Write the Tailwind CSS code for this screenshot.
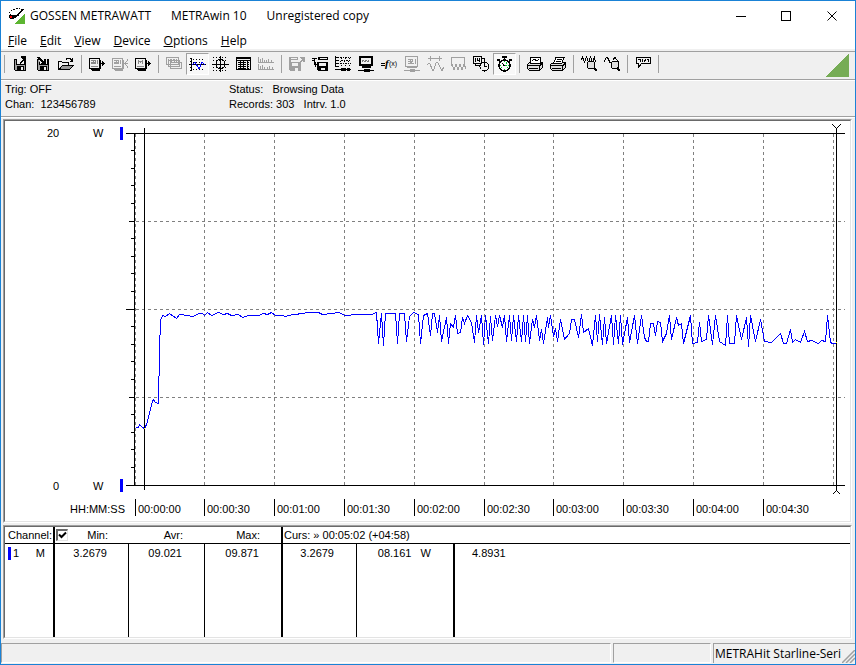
<!DOCTYPE html>
<html lang="en">
<head>
    <meta charset="UTF-8">
    <meta name="viewport" content="width=device-width, initial-scale=1.0">
    <title>GOSSEN METRAWATT - METRAwin 10</title>
    <script src="https://cdn.jsdelivr.net/npm/@tailwindcss/browser@4"></script>
</head>
<body class="min-h-screen flex flex-col border border-[#1a82d6] bg-[#f0f0f0] text-black font-['Open_Sans',sans-serif] text-[12px]">
    <!-- Title bar -->
    <header class="bg-white flex items-center h-[30px] pl-2 leading-4">
        <svg class="w-[17px] h-[17px] mr-1 shrink-0" viewBox="0 0 17 17" shape-rendering="crispEdges">
            <path d="M16 5V16H5z" fill="#5cb531"/>
            <path d="M0 4.500h1M2 2.500h1M4 1.500h2M7 .500h2M10 .5h1M12 1.500h1M1 6.500h1" stroke="#000"/>
            <path d="M0 7h8l-3 4H2l-2-1z" fill="#000"/>
            <path d="M1 8h2v2H1z" fill="#f00"/>
            <path d="M6 9l3-2 5-6" fill="none" stroke="#000" stroke-width="1.500"/>
        </svg>
        <h1 class="flex gap-5 whitespace-nowrap"><span>GOSSEN METRAWATT</span><span>METRAwin 10</span><span>Unregistered copy</span></h1>
        <div class="ml-auto flex h-full">
            <button class="w-[46px] flex items-center justify-center" aria-label="Minimize">
                <svg class="w-[11px] h-[11px]" viewBox="0 0 11 11" shape-rendering="crispEdges"><path d="M0 5.500h10" stroke="#000"/></svg>
            </button>
            <button class="w-[45px] flex items-center justify-center" aria-label="Maximize">
                <svg class="w-[11px] h-[11px]" viewBox="0 0 11 11" shape-rendering="crispEdges"><path d="M.5 .5h9v9h-9z" fill="none" stroke="#000"/></svg>
            </button>
            <button class="w-[46px] flex items-center justify-center" aria-label="Close">
                <svg class="w-[11px] h-[11px]" viewBox="0 0 11 11"><path d="M.5 .5l9 9M9.500 .5l-9 9" stroke="#000"/></svg>
            </button>
        </div>
    </header>

    <!-- Menu -->
    <nav class="bg-white flex gap-[13px] h-[18px] pl-[7px] pt-[2px] leading-4 shrink-0">
        <a href="#"><u>F</u>ile</a>
        <a href="#"><u>E</u>dit</a>
        <a href="#"><u>V</u>iew</a>
        <a href="#"><u>D</u>evice</a>
        <a href="#"><u>O</u>ptions</a>
        <a href="#"><u>H</u>elp</a>
    </nav>

    <!-- Toolbar -->
    <div class="mt-[2px] h-[29px] shrink-0 border-y border-[#a0a0a0] flex items-start pt-px" role="toolbar">
        <span class="w-px h-[18px] mt-[2px] ml-[3px] mr-1 bg-[#a0a0a0]"></span>
        <div class="flex">
            <button class="w-[23px] h-[22px] px-[3px]" aria-label="Save configuration">
                <svg class="w-[17px] h-[17px]" viewBox="0 0 17 17" shape-rendering="crispEdges">
                    <path d="M2.500 3.500h11v11h-10l-1-1z" fill="#a0a0a0" stroke="#000"/>
                    <path d="M5 3h7v5H5z" fill="#f0f0f0"/><path d="M4.500 4v4.500h8V5" fill="none" stroke="#000"/>
                    <path d="M5 10h7v4H5z" fill="#000"/><path d="M9 11h2v3H9z" fill="#f0f0f0"/>
                    <path d="M9 0h5v5h-2V4l-4 4-1-1 4-4-2-1z" fill="#000"/>
                </svg>
            </button>
            <button class="w-[23px] h-[22px] px-[3px]" aria-label="Load configuration">
                <svg class="w-[17px] h-[17px]" viewBox="0 0 17 17" shape-rendering="crispEdges">
                    <path d="M2.500 3.500h11v11h-10l-1-1z" fill="#a0a0a0" stroke="#000"/>
                    <path d="M4 2h8v6H5z" fill="#f0f0f0"/><path d="M4.500 6v2.500h8V4" fill="none" stroke="#000"/>
                    <path d="M5 10h7v4H5z" fill="#000"/><path d="M9 11h2v3H9z" fill="#f0f0f0"/>
                    <path d="M2 1h2l5 4V3h2v5H6V7h2L2 2z" fill="#000"/>
                </svg>
            </button>
            <button class="w-[23px] h-[22px] px-[3px]" aria-label="Open file">
                <svg class="w-[17px] h-[17px]" viewBox="0 0 17 17" shape-rendering="crispEdges">
                    <path d="M.5 13V5.500h3l1 1h6v3" fill="#f0f0f0" stroke="#000"/>
                    <path d="M1 13.500l3.500-4h11l-4 4z" fill="#999" stroke="#000"/>
                    <path d="M8 3.500l1-1h3l2 2M14.500 2v3.500H12" fill="none" stroke="#000"/>
                </svg>
            </button>
        </div>
        <span class="w-px h-[18px] mt-[2px] ml-[3px] mr-1 bg-[#a0a0a0]"></span>
        <div class="flex">
            <button class="w-[23px] h-[22px] px-[3px]" aria-label="Read device">
                <svg class="w-[17px] h-[17px]" viewBox="0 0 17 17" shape-rendering="crispEdges">
                    <path d="M2 13h9v2H3zM10 4h2v9h-2z" fill="#000"/><path d="M.5 2.500h10v10H.5z" fill="#f0f0f0" stroke="#000"/>
                    <path d="M2 4.500h2v3H2M2 6h2M5 4.500h1.500V6H5.500v1.500h1.500M8.500 4v4M2 10.500h7" fill="none" stroke="#888"/>
                    <path d="M12 7.500h4M13.500 5v5M14.500 6v3" stroke="#000"/>
                </svg>
            </button>
            <button class="w-[23px] h-[22px] px-[3px]" aria-label="Write device" disabled>
                <svg class="w-[17px] h-[17px]" viewBox="0 0 17 17" shape-rendering="crispEdges">
                    <path d="M2 13h9v2H3zM10 4h2v9h-2z" fill="#a0a0a0"/><path d="M.5 2.500h10v10H.5z" fill="#f0f0f0" stroke="#a0a0a0"/>
                    <path d="M2 4.500h2v3H2M2 6h2M5 4.500h1.500V6H5.500v1.500h1.500M8.500 4v4M2 10.500h7" fill="none" stroke="#a0a0a0"/>
                    <path d="M11 7.500h1M13 7.500h3M16 3.500l-3 4 3 4" fill="none" stroke="#a0a0a0"/>
                </svg>
            </button>
            <button class="w-[23px] h-[22px] px-[3px]" aria-label="Read memory">
                <svg class="w-[17px] h-[17px]" viewBox="0 0 17 17" shape-rendering="crispEdges">
                    <path d="M2 13h9v2H3zM10 4h2v9h-2z" fill="#000"/><path d="M.5 2.500h10v10H.5z" fill="#f0f0f0" stroke="#000"/>
                    <path d="M3.500 8V4.500L5.500 6l2-1.500V8M2 10.500h7" fill="none" stroke="#888"/>
                    <path d="M12 7.500h4M13.500 5v5M14.500 6v3" stroke="#000"/>
                </svg>
            </button>
        </div>
        <span class="w-px h-[18px] mt-[2px] ml-[3px] mr-1 bg-[#a0a0a0]"></span>
        <div class="flex">
            <button class="w-[23px] h-[22px] px-[3px]" aria-label="Digital display" disabled>
                <svg class="w-[17px] h-[17px]" viewBox="0 0 17 17" shape-rendering="crispEdges">
                    <path d="M4.500 6.500h11v6h-11zM2.500 4.500h11v6h-11zM.5 1.500h12v7H.5z" fill="#f0f0f0" stroke="#a0a0a0"/>
                    <path d="M2.500 3v4M4 3.500h1.500V5H4.500v1.500H6M7 3.500h1.500v3H7M10.500 3v4" fill="none" stroke="#a0a0a0"/>
                </svg>
            </button>
            <button class="w-[23px] h-[22px] px-[2px] border border-[#a0a0a0] border-r-white border-b-white bg-[#f8f8f8]" aria-label="Yt chart" aria-pressed="true">
                <svg class="w-[17px] h-[17px]" viewBox="0 0 17 17" shape-rendering="crispEdges">
                    <path d="M4 3.500h12M4 6.500h12M4 13.500h12" stroke="#000" stroke-dasharray="1 2"/>
                    <path d="M2.500 2v13M0 8.500h17" stroke="#000"/><path d="M1 2.500h1M1 5.500h1M1 11.500h1M1 14.500h1" stroke="#000"/>
                    <path d="M3 9l3-3 4 7 3-7 3 3" fill="none" stroke="#00f"/>
                </svg>
            </button>
            <button class="w-[23px] h-[22px] px-[3px]" aria-label="XY chart">
                <svg class="w-[17px] h-[17px]" viewBox="0 0 17 17" shape-rendering="crispEdges">
                    <path d="M1 1.500h15M1 4.500h15M1 11.500h15M1 14.500h15" stroke="#000" stroke-dasharray="1 2"/>
                    <circle cx="8.500" cy="8" r="4.500" fill="none" stroke="#000"/><path d="M8.500 0v16M0 8.500h17" stroke="#000"/>
                </svg>
            </button>
            <button class="w-[23px] h-[22px] px-[3px]" aria-label="Table view">
                <svg class="w-[17px] h-[17px]" viewBox="0 0 17 17" shape-rendering="crispEdges">
                    <path d="M1.500 1.500v12h14v-12zM1 4.500h15M1 2.500h15" fill="none" stroke="#000"/><path d="M5.500 4v10M8.500 4v10M12.500 4v10" stroke="#000"/>
                    <path d="M3 6.500h12M3 8.500h12M3 10.500h12M3 12.500h12" stroke="#000" stroke-dasharray="2 1"/>
                </svg>
            </button>
            <button class="w-[23px] h-[22px] px-[3px]" aria-label="Histogram" disabled>
                <svg class="w-[17px] h-[17px]" viewBox="0 0 17 17" shape-rendering="crispEdges">
                    <path d="M.5 1v5.500H16M.5 8v5.500H16" fill="none" stroke="#a0a0a0"/>
                    <path d="M2.500 3v4M4.500 2v4M6.500 4v3M8.500 4v2M10.500 3v3M13.500 4v2M2.500 10v3M4.500 9v4M6.500 11v2M9.500 11v2M11.500 10v3M14.500 11v2" stroke="#a0a0a0"/>
                </svg>
            </button>
        </div>
        <span class="w-px h-[18px] mt-[2px] ml-[3px] mr-1 bg-[#a0a0a0]"></span>
        <div class="flex">
            <button class="w-[23px] h-[22px] px-[3px]" aria-label="Export to file" disabled>
                <svg class="w-[17px] h-[17px]" viewBox="0 0 17 17" shape-rendering="crispEdges">
                    <path d="M0 1h9v3H2v2H0zM0 6h12v9H1l-1-1z" fill="#a0a0a0"/><path d="M2 2h6v1H2zM3 7h6v3H3zM6 12h3v3H6z" fill="#f0f0f0"/>
                    <path d="M11 1h5v5h-2V4l-4 4-1-1 4-4-2-1z" fill="#a0a0a0"/>
                </svg>
            </button>
            <button class="w-[23px] h-[22px] px-[3px]" aria-label="Record to file">
                <svg class="w-[17px] h-[17px]" viewBox="0 0 17 17" shape-rendering="crispEdges">
                    <path d="M6 1h10v3H6zM5 6h11v9H6l-1-1z" fill="#000"/><path d="M8 2h7v1H8zM7 7h7v3H7zM9 12h4v2H9z" fill="#f0f0f0"/>
                    <path d="M0 2.500h5M2.500 3v5.500H5M0 4.500h2" fill="none" stroke="#000"/><path d="M3 6h1v5H3z" fill="#000"/>
                </svg>
            </button>
            <button class="w-[23px] h-[22px] px-[3px]" aria-label="Channel list">
                <svg class="w-[17px] h-[17px]" viewBox="0 0 17 17" shape-rendering="crispEdges">
                    <path d="M.5 0v11M1 1.500h3M1 4.500h3M1 7.500h3M1 10.500h3" stroke="#000"/>
                    <path d="M5 1.500h11M6 4.500h10M5 7.500h11" stroke="#000" stroke-dasharray="2 1 1 1"/>
                    <path d="M6 2.500h10M5 5.500h10M6 9.500h9" stroke="#000" stroke-dasharray="1 3"/>
                    <path d="M0 13.500h16" stroke="#000"/><path d="M6 12h5v3H6zM12 12h3v3h-3z" fill="#000"/>
                </svg>
            </button>
            <button class="w-[23px] h-[22px] px-[3px]" aria-label="Interface">
                <svg class="w-[17px] h-[17px]" viewBox="0 0 17 17" shape-rendering="crispEdges">
                    <path d="M1 0h14v10H1zM4 10h9v2H4z" fill="#000"/><path d="M3 2h10v6H3z" fill="#f0f0f0"/>
                    <path d="M4 6l1-2 2 2 1-2 2 2 1-2" fill="none" stroke="#777"/>
                    <path d="M0 14.500h16" stroke="#000"/><path d="M6 13h6v3H6z" fill="#000"/>
                </svg>
            </button>
            <button class="w-[23px] h-[22px] px-[3px]" aria-label="Formula">
                <svg class="w-[17px] h-[17px]" viewBox="0 0 17 17">
                    <path d="M0 7.500h4M0 9.500h4" stroke="#000" shape-rendering="crispEdges"/>
                    <text x="4" y="11" font-family="Liberation Serif" font-size="11" font-weight="bold" font-style="italic">f</text>
                    <text x="8" y="10" font-family="Liberation Sans" font-size="7">(x)</text>
                </svg>
            </button>
            <button class="w-[23px] h-[22px] px-[3px]" aria-label="Device settings" disabled>
                <svg class="w-[17px] h-[17px]" viewBox="0 0 17 17" shape-rendering="crispEdges">
                    <path d="M1.500 .5h12v10h-12zM3 11.500h10M0 14.500h16M6 13.500h5M6 15.500h5" fill="none" stroke="#a0a0a0"/>
                    <path d="M4 3.500h2v4H4M4 5.500h2M7 3.500h1.500v2h-1v2h2M11.500 3v5" fill="none" stroke="#a0a0a0"/>
                </svg>
            </button>
            <button class="w-[23px] h-[22px] px-[3px]" aria-label="Limit window" disabled>
                <svg class="w-[17px] h-[17px]" viewBox="0 0 17 17" shape-rendering="crispEdges">
                    <path d="M1 2.500h14M3.500 0v5M12.500 0v5M.5 9l1-2h1l3 7h1l3-8h1l4 8h1l1-3" fill="none" stroke="#a0a0a0"/>
                </svg>
            </button>
            <button class="w-[23px] h-[22px] px-[3px]" aria-label="Compress" disabled>
                <svg class="w-[17px] h-[17px]" viewBox="0 0 17 17" shape-rendering="crispEdges">
                    <path d="M1.500 8V1.500h13V8M1 10l1-2 2 6 2-6 2 6 2-6 2 6 2-6 2 5" fill="none" stroke="#a0a0a0"/>
                </svg>
            </button>
            <button class="w-[23px] h-[22px] px-[3px]" aria-label="Time trigger">
                <svg class="w-[17px] h-[17px]" viewBox="0 0 17 17" shape-rendering="crispEdges">
                    <path d="M.5 .5h8v7h-8zM2.500 7.500v2h5M9 2.500h2V6" fill="none" stroke="#000"/><path d="M2.500 2v4M4.500 2v2.500h2M6.500 2v4" fill="none" stroke="#000"/>
                    <circle cx="11.500" cy="10.500" r="4.500" fill="#f0f0f0" stroke="#000"/><path d="M11.500 7v3.500H14" fill="none" stroke="#000"/>
                </svg>
            </button>
            <button class="w-[23px] h-[22px] px-[2px] border border-[#a0a0a0] border-r-white border-b-white bg-[#f8f8f8]" aria-label="Stopwatch" aria-pressed="true">
                <svg class="w-[17px] h-[17px]" viewBox="0 0 17 17" shape-rendering="crispEdges">
                    <circle cx="8.500" cy="9.500" r="5.500" fill="#fff" stroke="#000" stroke-width="1.500"/>
                    <path d="M6 0h5v2H6zM8 2h1v2H8zM1 3h3v2H1zM13 3h3v2h-3zM3 5h2v1H3zM12 5h2v1h-2z" fill="#000"/>
                    <path d="M8 5h1v1H8zM4 9h1v1H4zM12 9h1v1h-1zM8 13h1v1H8zM10 6h1v2h-1zM9 9h2v1H9zM5 11h1v1H5zM11 11h1v1h-1z" fill="#0c3"/>
                    <path d="M6 7l2.500 3" fill="none" stroke="#000"/>
                </svg>
            </button>
        </div>
        <span class="w-px h-[18px] mt-[2px] ml-[3px] mr-1 bg-[#a0a0a0]"></span>
        <div class="flex">
            <button class="w-[23px] h-[22px] px-[3px]" aria-label="Print chart">
                <svg class="w-[17px] h-[17px]" viewBox="0 0 17 17" shape-rendering="crispEdges">
                    <path d="M.5 8.500l2-2h13v5l-3 3H2.500l-2-2z" fill="#ddd" stroke="#000"/><path d="M3.500 7V1.500h10V7z" fill="#fff" stroke="#000"/>
                    <path d="M5 5l2-2 3 2 2-2" fill="none" stroke="#000"/><path d="M1 9.500h11.500V14M13 9.500l3-3M2 12.500h9" fill="none" stroke="#000"/>
                </svg>
            </button>
            <button class="w-[23px] h-[22px] px-[3px]" aria-label="Print table">
                <svg class="w-[17px] h-[17px]" viewBox="0 0 17 17" shape-rendering="crispEdges">
                    <path d="M.5 8.500l3-2h12v5l-3 3H2.500l-2-2z" fill="#ddd" stroke="#000"/><path d="M3.500 7l2.500-5.500h8L12 7z" fill="#fff" stroke="#000"/>
                    <path d="M7 3.500h5M6 5.500h5" stroke="#000"/><path d="M1 9.500h11.500V14M13 9.500l3-3M2 12.500h9" fill="none" stroke="#000"/>
                </svg>
            </button>
        </div>
        <span class="w-px h-[18px] mt-[2px] ml-[3px] mr-1 bg-[#a0a0a0]"></span>
        <div class="flex">
            <button class="w-[23px] h-[22px] px-[3px]" aria-label="Zoom in">
                <svg class="w-[17px] h-[17px]" viewBox="0 0 17 17" shape-rendering="crispEdges">
                    <path d="M.5 4l1-3 2 5 2-5 2 5 2-5 2 5 2-5 1 5" fill="none" stroke="#000"/>
                    <circle cx="10" cy="9" r="4" fill="#ddd" stroke="#000"/><path d="M13 12l3 3" stroke="#000" stroke-width="2"/>
                </svg>
            </button>
            <button class="w-[23px] h-[22px] px-[3px]" aria-label="Zoom out">
                <svg class="w-[17px] h-[17px]" viewBox="0 0 17 17" shape-rendering="crispEdges">
                    <path d="M.5 6V4.500l2-3h1l3 6M9 3.500l2-2 3 4 1 2" fill="none" stroke="#000"/>
                    <circle cx="11" cy="9" r="4" fill="#ddd" stroke="#000"/><path d="M13 12l3 3" stroke="#000" stroke-width="2"/>
                </svg>
            </button>
        </div>
        <span class="w-px h-[18px] mt-[2px] ml-[3px] mr-1 bg-[#a0a0a0]"></span>
        <button class="w-[23px] h-[22px] px-[3px]" aria-label="Comment">
            <svg class="w-[17px] h-[17px]" viewBox="0 0 17 17" shape-rendering="crispEdges">
                <path d="M1.500 1.500h14v6h-9l-3 4v-4h-2z" fill="#f0f0f0" stroke="#000"/>
                <path d="M3 3.500h2v2M7.500 3v3M9 5.500l2-2M12 3.500h1v2h1" fill="none" stroke="#000"/>
            </svg>
        </button>
        <span class="w-px h-[18px] mt-[2px] ml-[3px] bg-[#a0a0a0]"></span>
        <svg class="w-6 h-6 ml-auto mr-[6px]" viewBox="0 0 24 24" shape-rendering="crispEdges"><path d="M24 0V24H0z" fill="#76ac55"/></svg>
    </div>

    <!-- Acquisition info -->
    <section class="h-[37px] shrink-0 border-b border-[#a0a0a0] border-t border-t-white pt-px pl-1 flex font-['Liberation_Sans',sans-serif] text-[11px] leading-[15px]">
        <div class="w-[224px]">
            <p class="whitespace-pre">Trig: OFF</p>
            <p class="whitespace-pre">Chan:  123456789</p>
        </div>
        <div>
            <p class="whitespace-pre">Status:   Browsing Data</p>
            <p class="whitespace-pre">Records: 303   Intrv. 1.0</p>
        </div>
    </section>

    <!-- Chart -->
    <main class="grow flex flex-col gap-[2px] pl-[2px] pr-[3px] pt-px border-t border-white font-['Liberation_Sans',sans-serif] text-[11px]">
        <div class="border border-[#a0a0a0] border-r-white border-b-white">
            <div class="bg-white border border-[#696969] border-r-[#e3e3e3] border-b-[#e3e3e3]">
                <svg id="chart" class="block w-full" viewBox="5 121 845 400" shape-rendering="crispEdges" font-size="11"></svg>
            </div>
        </div>

        <!-- Channel values -->
        <div class="grow flex border border-[#a0a0a0] border-r-white border-b-white">
            <div class="grow flex bg-white border border-[#696969] border-r-[#e3e3e3] border-b-[#e3e3e3]">
                <table class="w-full table-fixed border-separate border-spacing-0 leading-4">
                    <colgroup>
                        <col class="w-[50px]"><col class="w-[74px]"><col class="w-[76px]"><col class="w-[78px]"><col class="w-[74px]"><col class="w-[98px]"><col>
                    </colgroup>
                    <thead>
                        <tr class="h-[17px] text-right">
                            <th class="p-0 pl-[3px] border-b border-r-2 border-black font-normal text-left">Channel:</th>
                            <th class="p-0 pr-[21px] border-b border-black font-normal relative">
                                <input id="minmax" type="checkbox" checked aria-label="Show minimum and maximum" class="peer appearance-none absolute left-px top-[2px] w-3 h-3 bg-white border-2 border-r border-b border-[#696969] border-r-[#e3e3e3] border-b-[#e3e3e3]">
                                <svg class="hidden peer-checked:block pointer-events-none absolute left-[3px] top-1 w-[9px] h-[9px]" viewBox="0 0 9 9"><path d="M1 3.500l2.500 2.500L8 1.500" fill="none" stroke="#000" stroke-width="2"/></svg>
                                <label for="minmax">Min:</label>
                            </th>
                            <th class="p-0 pr-[22px] border-b border-black font-normal">Avr:</th>
                            <th class="p-0 pr-[21px] border-b border-r-2 border-black font-normal">Max:</th>
                            <th class="p-0 pl-px border-b border-black font-normal text-left" colspan="3">Curs: » 00:05:02 (+04:58)</th>
                        </tr>
                    </thead>
                    <tbody>
                        <tr class="text-right align-top">
                            <td class="p-0 pt-px border-r-2 border-black">
                                <div class="flex items-center pl-[3px] pr-2"><span class="w-[3px] h-[13px] mr-[2px] bg-[#00f]"></span>1<span class="ml-auto">M</span></div>
                            </td>
                            <td class="p-0 pt-px pr-[21px] border-r border-black">3.2679</td>
                            <td class="p-0 pt-px pr-[22px] border-r border-black">09.021</td>
                            <td class="p-0 pt-px pr-[22px] border-r-2 border-black">09.871</td>
                            <td class="p-0 pt-px pr-[22px] border-r border-black">3.2679</td>
                            <td class="p-0 pt-px pr-[22px] border-r-2 border-black whitespace-pre">08.161   W</td>
                            <td class="p-0 pt-px pl-[17px] text-left">4.8931</td>
                        </tr>
                    </tbody>
                </table>
            </div>
        </div>
    </main>

    <!-- Status bar -->
    <footer class="h-5 mt-1 mb-px shrink-0 flex gap-[2px] leading-4">
        <div class="grow border border-[#a0a0a0] border-r-white border-b-white"></div>
        <div class="w-[98px] border border-[#a0a0a0] border-r-white border-b-white"></div>
        <div class="w-[142px] flex items-center border-t border-l border-[#a0a0a0] pl-px whitespace-nowrap">
            METRAHit Starline-Seri
            <svg class="w-[13px] h-[13px] ml-auto self-end shrink-0" viewBox="0 0 13 13"><path d="M0 13L13 0M4 13l9-9M8 13l5-5" stroke="#a0a0a0" stroke-width="1.500"/></svg>
        </div>
    </footer>

    <script>
        const chart = document.getElementById('chart');

        function add(name, attrs, text) {
            const el = document.createElementNS('http://www.w3.org/2000/svg', name);
            for (const key in attrs) el.setAttribute(key, attrs[key]);
            if (text) el.textContent = text;
            chart.appendChild(el);
        }

        // Grid and time labels
        const gridX = [135, 204, 274, 344, 414, 484, 553, 623, 693, 763, 833];
        gridX.forEach((x, i) => {
            add('path', { d: `M${x + 0.5} 134V485`, stroke: '#808080', 'stroke-dasharray': '3 3' });
            if (i < 10) {
                const time = `00:0${Math.floor(i / 2)}:${i % 2 ? '30' : '00'}`;
                add('path', { d: `M${x + 0.5} 499v17`, stroke: '#000' });
                add('text', { x: x + 3, y: 513 }, time);
            }
        });
        [221, 309, 397].forEach(y => add('path', { d: `M136 ${y + 0.5}H845`, stroke: '#808080', 'stroke-dasharray': '3 3' }));

        // Value axis, a longer tick every fifth step
        for (let i = 1; i < 20; i++) {
            const y = Math.floor(133 + i * 17.6) + 0.5;
            const x = i === 10 ? 126 : i % 5 === 0 ? 129 : 131;
            add('path', { d: `M${x} ${y}H134`, stroke: '#000' });
        }
        add('path', { d: 'M126 133.5H845M126 485.5H845M134.5 133V486', stroke: '#000' });

        add('text', { x: 47, y: 137 }, '20');
        add('text', { x: 53, y: 490 }, '0');
        add('text', { x: 93, y: 137 }, 'W');
        add('text', { x: 93, y: 490 }, 'W');
        add('text', { x: 70, y: 513 }, 'HH:MM:SS');
        add('path', { d: 'M120 127h3v13h-3zM120 479h3v13h-3z', fill: '#00f' });

        // Measured power
        const points = `135,427 138,427 139,424 142,427 144,428 146,424 149,413 152,401 153,399 155,402 158,403 159,350 160,320
            162,315 165,316 169,313 176,318 179,314 187,315 192,316 199,313 202,313 204,315 207,312 211,315 218,312 223,314 227,313 231,315 238,314
            242,317 248,315 258,315 263,313 267,314 271,312 275,315 282,315 285,316 292,314 296,314 300,313 310,312 318,312 322,314 332,313 338,312
            345,315 357,314 363,314 371,314 376,312 378,343 381,313 383,345 385,313 395,313 397,343 399,313 404,313 406,341 409,316 413,312 418,314
            420,343 423,315 427,313 430,335 432,313 434,313 437,332 439,315 441,341 446,317 448,343 450,323 453,327 455,315 457,333 460,332 462,317
            464,323 467,315 471,322 474,342 476,315 478,332 481,315 483,344 485,315 488,343 490,316 492,340 495,315 497,326 499,315 502,327 504,315
            506,341 509,315 511,340 513,315 516,341 518,315 521,341 523,315 525,341 527,315 529,343 532,319 534,327 536,315 539,340 541,329 543,343
            547,317 548,327 550,315 553,336 555,328 557,341 560,319 564,339 569,333 571,319 574,319 578,337 581,314 583,332 588,328 592,345 595,315
            597,341 599,314 602,344 604,317 606,343 611,315 613,344 615,315 618,343 620,315 622,344 627,317 629,342 634,315 637,343 641,315 644,337
            646,341 648,341 650,323 653,323 655,335 657,321 660,322 662,341 666,333 669,315 671,339 676,317 678,325 681,323 683,343 690,315 692,343
            697,342 699,322 701,341 706,339 708,315 712,344 715,315 719,341 725,345 727,315 729,343 734,343 736,315 741,339 746,317 748,346 750,315
            755,341 760,319 764,341 771,342 780,333 783,343 786,343 790,329 792,342 795,339 800,342 804,331 807,341 811,340 818,343 821,340 825,341
            827,315 830,342 832,343 836,343`;
        add('polyline', { points, fill: 'none', stroke: '#00f', transform: 'translate(0.5 0.5)' });

        // Cursors
        add('path', { d: 'M144.5 128V490M836.5 129V491M832.5 124.5l4 4 4-4M832.5 494.5l4-4 4 4', fill: 'none', stroke: '#000' });
        add('path', { d: 'M144 428h1v1h-1zM836 342h1v1h-1z', fill: '#ff0' });
    </script>
</body>
</html>
